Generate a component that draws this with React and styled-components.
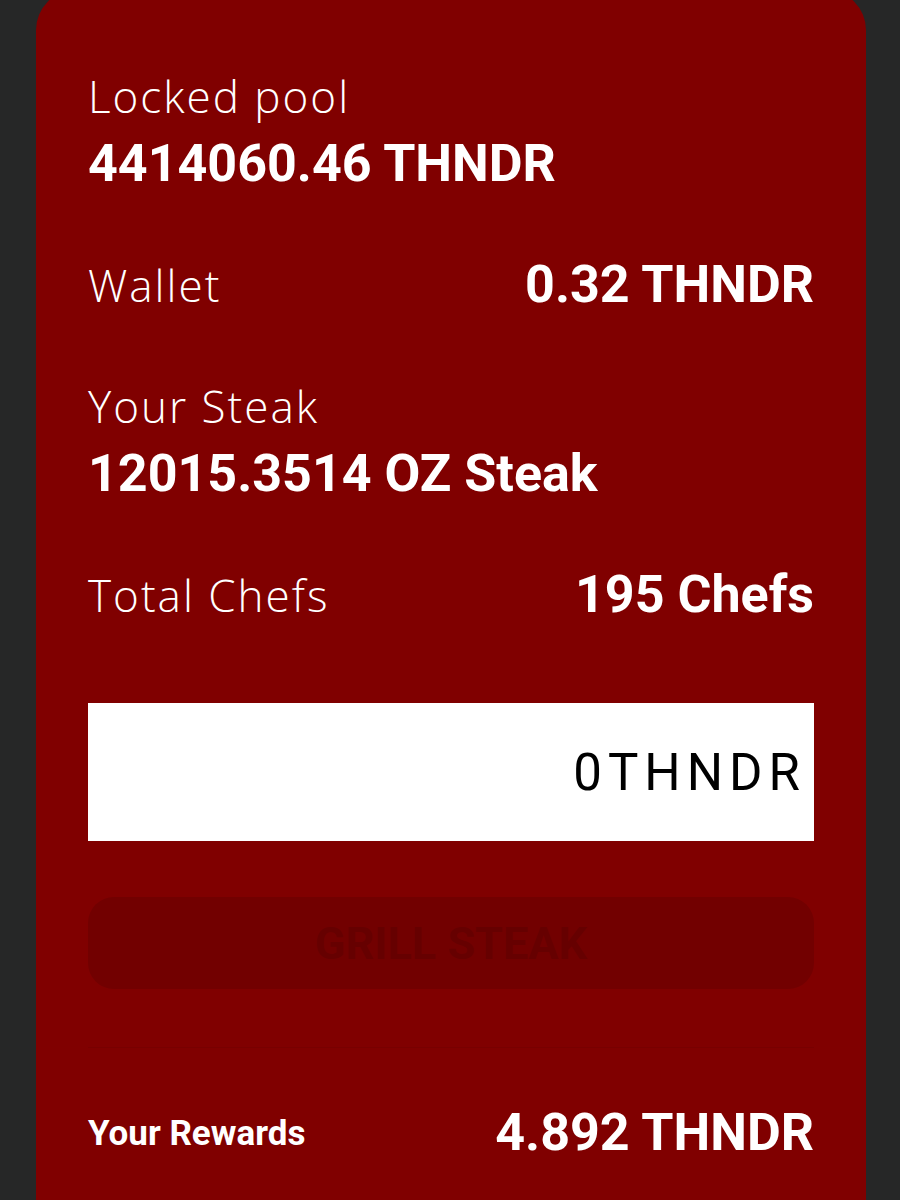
import React, { useState } from 'react';
import styled, { createGlobalStyle } from 'styled-components';

const GlobalStyle = createGlobalStyle`
  html, body {
    margin: 0;
    padding: 0;
    background: #262727;
  }
  * {
    box-sizing: border-box;
  }
`;

const Page = styled.div`
  width: 900px;
  height: 1200px;
  overflow: hidden;
  padding: 0 34px 0 36px;
`;

const Card = styled.div`
  margin-top: -10px;
  height: 1300px;
  background: #800000;
  border-radius: 40px;
  padding: 73px 52px 0 52px;
  display: flex;
  flex-direction: column;
`;

const Stat = styled.div`
  display: flex;
  flex-direction: ${(p) => (p.inline ? 'row' : 'column')};
  justify-content: ${(p) => (p.inline ? 'space-between' : 'flex-start')};
  align-items: ${(p) => (p.inline ? 'center' : 'flex-start')};
  margin-bottom: ${(p) => p.gap || 0}px;
`;

const Label = styled.div`
  font-family: 'Open Sans', 'Lato', sans-serif;
  font-weight: 300;
  font-size: 44px;
  line-height: 66px;
  color: #fff;
  letter-spacing: 2px;
`;

const Value = styled.div`
  font-family: Roboto, 'Liberation Sans', sans-serif;
  font-weight: 700;
  font-size: 52px;
  line-height: 70px;
  color: #fff;
`;

const Input = styled.input`
  width: 100%;
  height: 138px;
  flex-shrink: 0;
  border: none;
  outline: none;
  background: #fff;
  text-align: right;
  padding: 0 8px 0 14px;
  font-family: Roboto, 'Liberation Sans', sans-serif;
  font-weight: 400;
  font-size: 51px;
  letter-spacing: 6px;
  color: #000;
`;

const GrillButton = styled.button`
  margin-top: 56px;
  width: 100%;
  height: 92px;
  flex-shrink: 0;
  border: none;
  border-radius: 26px;
  background: #720000;
  color: #660000;
  font-family: Roboto, 'Liberation Sans', sans-serif;
  font-weight: 700;
  font-size: 45px;
  cursor: not-allowed;
`;

const Divider = styled.div`
  margin-top: 58px;
  height: 1px;
  flex-shrink: 0;
  background: #780000;
`;

const Rewards = styled.div`
  margin-top: 50px;
  display: flex;
  justify-content: space-between;
  align-items: center;
`;

const RewardsLabel = styled.div`
  font-family: Roboto, 'Liberation Sans', sans-serif;
  font-weight: 700;
  font-size: 35px;
  color: #fff;
`;

const App = () => {
  const [amount, setAmount] = useState('0THNDR');

  return (
    <>
      <GlobalStyle />
      <Page>
        <Card>
          <Stat gap={51}>
            <Label>Locked pool</Label>
            <Value>4414060.46 THNDR</Value>
          </Stat>
          <Stat inline gap={53}>
            <Label>Wallet</Label>
            <Value>0.32 THNDR</Value>
          </Stat>
          <Stat gap={51}>
            <Label>Your Steak</Label>
            <Value>12015.3514 OZ Steak</Value>
          </Stat>
          <Stat inline gap={73}>
            <Label>Total Chefs</Label>
            <Value>195 Chefs</Value>
          </Stat>
          <Input value={amount} onChange={(e) => setAmount(e.target.value)} />
          <GrillButton disabled>GRILL STEAK</GrillButton>
          <Divider />
          <Rewards>
            <RewardsLabel>Your Rewards</RewardsLabel>
            <Value>4.892 THNDR</Value>
          </Rewards>
        </Card>
      </Page>
    </>
  );
};

export default App;
